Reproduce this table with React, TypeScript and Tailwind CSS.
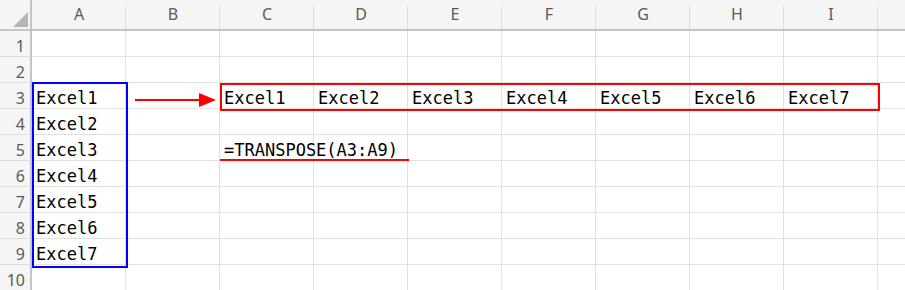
import React from "react";

const cols = ["A", "B", "C", "D", "E", "F", "G", "H", "I"];
const rows = [1, 2, 3, 4, 5, 6, 7, 8, 9, 10];

function cellText(r: number, c: number): string {
  if (c === 0 && r >= 3 && r <= 9) return "Excel" + (r - 2);
  if (r === 3 && c >= 2 && c <= 8) return "Excel" + (c - 1);
  if (r === 5 && c === 2) return "=TRANSPOSE(A3:A9)";
  return "";
}

export default function App() {
  return (
    <div className="w-[905px] h-[290px] overflow-hidden bg-white">
      <div className="relative grid grid-cols-[32px_repeat(9,94px)_1fr] grid-rows-[31px_repeat(10,26px)]">
        {/* header row */}
        <div className="relative bg-[#f5f5f5] border-r-[2px] border-b-[2px] border-[#c4c4c4]">
          <svg className="absolute left-[13px] top-[12px]" width="15" height="15" viewBox="0 0 15 15">
            <polygon points="15,0 15,15 0,15" fill="#b5b5b5" />
          </svg>
        </div>
        {cols.map((c) => (
          <div
            key={c}
            className="flex items-end justify-center pb-[3px] bg-[#f5f5f5] border-b-[2px] border-[#c4c4c4] relative text-[16px] text-[#5a5a5a] font-['Noto_Sans',sans-serif] leading-[24px]"
          >
            {c}
            <div className="absolute right-0 top-[6px] bottom-0 w-px bg-[#dcdcdc]" />
          </div>
        ))}
        <div className="bg-[#f5f5f5] border-b-[2px] border-[#c4c4c4]" />
        {rows.map((r) => (
          <React.Fragment key={r}>
            <div className="flex items-center justify-end pr-[5px] pt-[5px] bg-[#f5f5f5] border-r-[2px] border-b border-r-[#c4c4c4] border-b-[#dcdcdc] text-[16px] text-[#5a5a5a] font-['Noto_Sans',sans-serif] leading-none">
              {r}
            </div>
            {cols.map((c, ci) => (
              <div
                key={c}
                className="flex items-center pl-[4px] pt-[6px] border-r border-b border-[#e1e1e1] text-[17px] text-black font-['DejaVu_Sans_Mono',monospace] leading-none whitespace-nowrap"
              >
                {cellText(r, ci)}
              </div>
            ))}
            <div className="border-b border-[#e1e1e1]" />
          </React.Fragment>
        ))}

        {/* overlays */}
        <div className="absolute left-[32px] top-[82px] w-[96px] h-[186px] border-2 border-[#0000ff] pointer-events-none" />
        <div className="absolute left-[220px] top-[83px] w-[660px] h-[28px] border-2 border-[#ff0000] pointer-events-none" />
        <div className="absolute left-[220px] top-[159px] w-[189px] h-[2px] bg-[#ff0000]" />
        <svg className="absolute left-[135px] top-[92px]" width="82" height="16" viewBox="0 0 82 16">
          <line x1="0" y1="8" x2="66" y2="8" stroke="#ff0000" strokeWidth="2" />
          <polygon points="64,1 81,8 64,15" fill="#ff0000" />
        </svg>
      </div>
    </div>
  );
}
